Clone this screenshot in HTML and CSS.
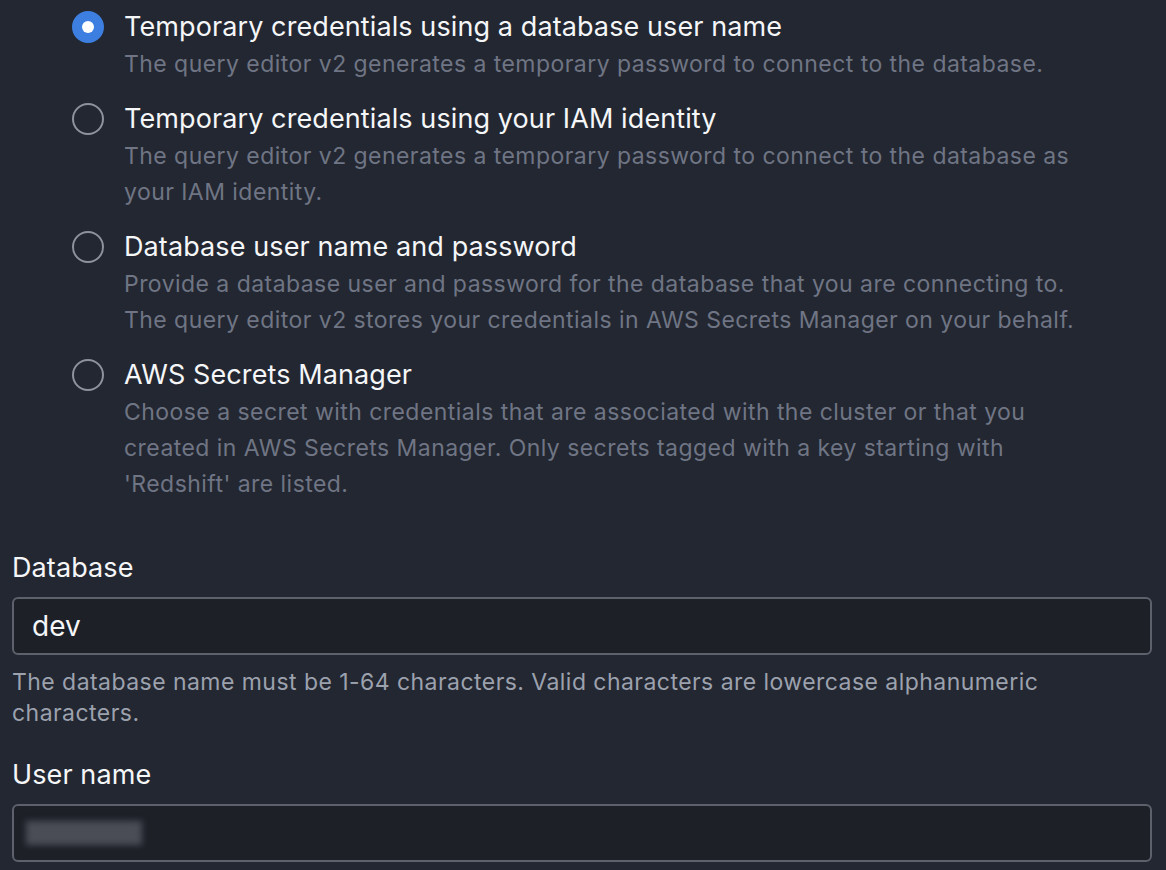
FILE: index.html
```html
<!DOCTYPE html>
<html>
<head>
<meta charset="utf-8">
<link rel="stylesheet" href="styles.css">
</head>
<body>
<div class="page">
  <div class="radios">
    <div class="opt">
      <span class="radio checked"></span>
      <div class="txt">
        <div class="lbl">Temporary credentials using a database user name</div>
        <div class="desc">The query editor v2 generates a temporary password to connect to the database.</div>
      </div>
    </div>
    <div class="opt">
      <span class="radio"></span>
      <div class="txt">
        <div class="lbl">Temporary credentials using your IAM identity</div>
        <div class="desc">The query editor v2 generates a temporary password to connect to the database as your IAM identity.</div>
      </div>
    </div>
    <div class="opt">
      <span class="radio"></span>
      <div class="txt">
        <div class="lbl">Database user name and password</div>
        <div class="desc">Provide a database user and password for the database that you are connecting to. The query editor v2 stores your credentials in AWS Secrets Manager on your behalf.</div>
      </div>
    </div>
    <div class="opt">
      <span class="radio"></span>
      <div class="txt">
        <div class="lbl">AWS Secrets Manager</div>
        <div class="desc">Choose a secret with credentials that are associated with the cluster or that you created in AWS Secrets Manager. Only secrets tagged with a key starting with 'Redshift' are listed.</div>
      </div>
    </div>
  </div>

  <div class="field first">
    <div class="flabel">Database</div>
    <div class="input">dev</div>
    <div class="help">The database name must be 1-64 characters. Valid characters are lowercase alphanumeric characters.</div>
  </div>

  <div class="field second">
    <div class="flabel">User name</div>
    <div class="input"><span class="blur"></span></div>
  </div>
</div>
</body>
</html>
```

FILE: styles.css
```css
html, body {
  margin: 0;
  padding: 0;
  background: #232731;
}
body {
  font-family: Inter, "Open Sans", sans-serif;
  color: #f2f3f5;
  width: 1166px;
  height: 870px;
  overflow: hidden;
}
.page {
  padding: 8px 14px 0 12px;
}
.radios {
  display: flex;
  flex-direction: column;
  gap: 18px;
  padding-left: 60px;
}
.opt {
  display: flex;
  gap: 20px;
}
.txt {
  max-width: 960px;
}
.radio {
  flex: none;
  width: 28px;
  height: 28px;
  border: 2px solid #8d939e;
  border-radius: 50%;
  margin-top: 3px;
  box-sizing: content-box;
  position: relative;
}
.radio.checked {
  background: #3d7fe0;
  border-color: #3d7fe0;
}
.radio.checked::after {
  content: "";
  position: absolute;
  left: 8px;
  top: 8px;
  width: 12px;
  height: 12px;
  border-radius: 50%;
  background: #fff;
}
.lbl {
  font-size: 27px;
  line-height: 38px;
  letter-spacing: 0.1px;
  color: #f5f6f8;
}
.desc {
  font-size: 23px;
  line-height: 36px;
  color: #6f7584;
  letter-spacing: 0.45px;
}
.field.first {
  margin-top: 48px;
}
.field.second {
  margin-top: 28px;
}
.flabel {
  font-size: 27px;
  line-height: 36px;
  letter-spacing: 0.1px;
  color: #f5f6f8;
  margin-bottom: 11px;
}
.input {
  height: 54px;
  border: 2px solid #5c616c;
  border-radius: 6px;
  background: #1e2028;
  padding: 0 18px;
  font-size: 28px;
  line-height: 54px;
  color: #f5f6f8;
  display: flex;
  align-items: center;
}
.help {
  margin-top: 12px;
  font-size: 23px;
  line-height: 31px;
  color: #9ca1ae;
  letter-spacing: 0.45px;
}
.blur {
  display: block;
  width: 116px;
  height: 24px;
  margin-left: -6px;
  background: #4a4d55;
  filter: blur(3px);
}
```
